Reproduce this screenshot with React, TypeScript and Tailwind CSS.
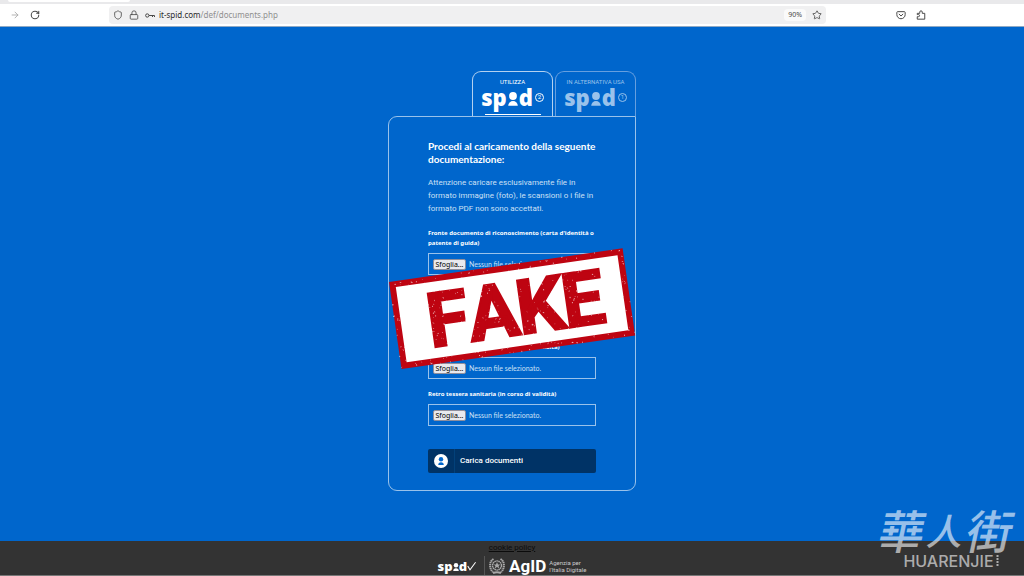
import React from 'react';
import { ArrowRight, RotateCw, Shield, Lock, Star } from 'lucide-react';
import { clsx } from 'clsx';

const FIELDS = [
  { id: 'fronte-doc', label: "Fronte documento di riconoscimento (carta d'identità o patente di guida)" },
  { id: 'retro-doc', label: "Retro documento di riconoscimento (carta d'identità o patente di guida)" },
  { id: 'fronte-tessera', label: 'Fronte tessera sanitaria (in corso di validità)' },
  { id: 'retro-tessera', label: 'Retro tessera sanitaria (in corso di validità)' },
];

// worn-ink specks of the stamp, same sequence on every render
const makeSpecks = (count: number) => {
  let seed = 41;
  const next = () => {
    seed = (seed * 16807) % 2147483647;
    return seed / 2147483647;
  };
  return Array.from({ length: count }, () => ({
    x: next() * 236,
    y: next() * 88,
    rx: 0.3 + next() * 0.7,
    ry: 0.2 + next() * 0.4,
    angle: Math.round(next() * 180),
  }));
};

const SPECKS = makeSpecks(520);

const BrowserBar = () => (
  <header className="border-b border-[#8fa9c4] bg-white font-['Noto_Sans',sans-serif]">
    <div className="h-1 bg-[#e9e9eb]">
      <div className="ml-2 h-0.5 w-[122px] rounded-b bg-white" />
    </div>
    <div className="flex h-[22px] items-center text-[#4a4a4a]">
      <div className="flex w-[109px] items-center gap-[10px] pl-[10px]">
        <button type="button" aria-label="Avanti">
          <ArrowRight className="size-[10px] text-[#a5a5a5]" />
        </button>
        <button type="button" aria-label="Ricarica">
          <RotateCw className="size-[10px]" strokeWidth={2.5} />
        </button>
      </div>
      <div className="flex h-[18px] flex-1 items-center rounded-sm bg-[#f0f0f1] px-1">
        <Shield className="size-[10px]" />
        <Lock className="ml-[6px] size-[10px]" />
        <svg viewBox="0 0 20 10" className="ml-[6px] h-[5px] w-[10px]" fill="none" stroke="currentColor" strokeWidth="2">
          <circle cx="4.5" cy="5" r="3.3" />
          <path d="M8 5h11v3M15 5v3" />
        </svg>
        <span className="ml-1 text-[8px] text-[#8f8f8f]">
          <span className="text-[#2b2b2b]">it-spid.com</span>/def/documents.php
        </span>
        <span className="ml-auto rounded-sm bg-[#fafafa] px-1 text-[7px] leading-3">90%</span>
        <button type="button" aria-label="Aggiungi ai preferiti" className="ml-[6px]">
          <Star className="size-[10px]" />
        </button>
      </div>
      <div className="flex w-[198px] items-center gap-[10px] pl-[70px]">
        <button type="button" aria-label="Pocket">
          <svg viewBox="0 0 24 24" className="size-[10px]" fill="none" stroke="currentColor" strokeWidth="2.4">
            <path d="M4 4h16a2 2 0 0 1 2 2v5a10 10 0 0 1-20 0V6a2 2 0 0 1 2-2Z" />
            <path d="m7.5 10 4.5 4.500L16.5 10" strokeLinecap="round" />
          </svg>
        </button>
        <button type="button" aria-label="Estensioni">
          <svg viewBox="0 0 24 24" className="size-[10px]" fill="none" stroke="currentColor" strokeWidth="2.4" strokeLinejoin="round">
            <path d="M3 22v-6h3a2.500 2.500 0 0 0 0-5H3V8h6V5a3 3 0 0 1 6 0v3h6v14Z" />
          </svg>
        </button>
      </div>
    </div>
  </header>
);

const SpidDot = ({ className }: { className: string }) => (
  <svg viewBox="0 0 10 14" className={className} fill="currentColor">
    <circle cx="5" cy="4" r="3.9" />
    <path d="M.2 13.800a4.800 4.800 0 0 1 9.600 0Z" />
  </svg>
);

const SpidTab = ({ title, level, active }: { title: string; level: number; active?: boolean }) => (
  <button
    type="button"
    className={clsx(
      'flex h-[45px] w-[81px] flex-col items-center rounded-t-[9px] border border-b-0 pt-[6px]',
      active ? 'border-[#b3d1f0] text-white' : 'border-[#669fdf] text-[#99c2eb]',
    )}
  >
    <span className="text-[6px] leading-2">{title}</span>
    <span className="flex items-center">
      <span className="font-['Open_Sans',sans-serif] text-[22px] leading-[22px] font-extrabold">sp</span>
      <SpidDot className="mx-px mt-1 h-[14px] w-[10px]" />
      <span className="font-['Open_Sans',sans-serif] text-[22px] leading-[22px] font-extrabold">d</span>
      <span className="ml-[2px] flex size-[9px] items-center justify-center rounded-full border border-current text-[6px] leading-none">
        {level}
      </span>
    </span>
    {active && <span className="mt-[6px] h-px w-[56px] bg-white" />}
  </button>
);

const FileField = ({ id, label }: { id: string; label: string }) => (
  <div className="mb-[10px]">
    <label htmlFor={id} className="block font-['Noto_Sans',sans-serif] text-[6px] leading-[10px] font-bold">
      {label}
    </label>
    <div className="relative mt-[5px] flex h-[22px] items-center border border-[#99c2eb] px-1">
      <input id={id} type="file" accept="image/*" className="absolute inset-0 opacity-0" />
      <span className="w-[33px] rounded-[2px] border border-[#8f8f9d] bg-[#e9e9ed] text-center font-['Noto_Sans',sans-serif] text-[7px] leading-[9px] text-black">
        Sfoglia...
      </span>
      <span className="ml-[3px] font-['Lato',sans-serif] text-[7px] leading-3 text-[#cce0f5]">
        Nessun file selezionato.
      </span>
    </div>
  </div>
);

const FakeStamp = () => (
  <svg
    viewBox="0 0 248 122"
    className="pointer-events-none absolute top-[131px] -left-px w-[248px] overflow-visible"
  >
    <g transform="translate(1 34) rotate(-8.2)">
      <rect x="3" y="3" width="230" height="82" fill="#fff" stroke="#be0411" strokeWidth="6" />
      <text
        x="32 73 122 168"
        y="71"
        fill="#be0411"
        stroke="#be0411"
        strokeWidth="2"
        className="font-['Roboto',sans-serif] text-[76px] font-bold"
      >
        FAKE
      </text>
      {SPECKS.map((s, i) => (
        <ellipse
          key={i}
          cx={s.x}
          cy={s.y}
          rx={s.rx}
          ry={s.ry}
          fill="#fff"
          fillOpacity="0.7"
          transform={`rotate(${s.angle} ${s.x} ${s.y})`}
        />
      ))}
    </g>
  </svg>
);

const UploadCard = () => (
  <div className="w-[248px]">
    <div className="flex justify-end gap-[2px]">
      <SpidTab title="UTILIZZA" level={2} active />
      <SpidTab title="IN ALTERNATIVA USA" level={1} />
    </div>
    <section className="relative rounded-[9px] rounded-tr-none border border-[#99c2eb] px-[39px] pt-[23px] pb-[17px]">
      <h1 className="font-['Lato',sans-serif] text-[10px] leading-[13px] font-bold">
        Procedi al caricamento della seguente documentazione:
      </h1>
      <p className="mt-[10px] mb-[13px] text-[8px] leading-[13px] text-[#cce0f5]">
        Attenzione caricare esclusivamente file in
        <br />
        formato immagine (foto), le scansioni o i file in
        <br />
        formato PDF non sono accettati.
      </p>
      <form>
        {FIELDS.map((f) => (
          <FileField key={f.id} {...f} />
        ))}
        <button
          type="button"
          className="mt-[23px] flex h-6 w-full items-center rounded-[2px] bg-[#036] text-left text-[8px] font-medium"
        >
          <span className="flex h-full w-[27px] items-center justify-center border-r border-[#02417a]">
            <span className="flex size-[14px] items-center justify-center rounded-full bg-white">
              <SpidDot className="h-2 w-[6px] text-[#06c]" />
            </span>
          </span>
          <span className="ml-[5px]">Carica documenti</span>
        </button>
      </form>
      <FakeStamp />
    </section>
  </div>
);

const Emblem = () => (
  <svg viewBox="0 0 32 36" className="h-[18px] w-4" fill="none" stroke="#a8a8a8" strokeWidth="2">
    <circle cx="16" cy="17" r="9" strokeWidth="3" strokeDasharray="3 1" />
    <path d="m16 10 2 5h5l-4 3 2 5-5-3-5 3 2-5-4-3h5Z" fill="#a8a8a8" stroke="none" />
    <path d="M9 4C0 9 0 23 8 30M23 4c9 5 9 19 1 26" strokeWidth="4" strokeDasharray="3 1" />
    <path d="M8 32c5-2 11-2 16 0" strokeWidth="4" />
  </svg>
);

const Footer = () => (
  <footer className="flex flex-col items-center border-b border-[#777] bg-[#333] pt-px text-white">
    <a href="#cookie" className="text-[8px] leading-3 text-[#0b0b0b] underline">
      cookie policy
    </a>
    <div className="flex h-[21px] items-center pt-[2px]">
      <span className="flex items-center font-['Open_Sans',sans-serif] text-[13px] leading-4 font-extrabold">
        sp
        <SpidDot className="mt-[2px] h-2 w-[6px]" />
        d
        <svg viewBox="0 0 12 12" className="h-[10px] w-[9px]" fill="none" stroke="currentColor" strokeWidth="1.4">
          <path d="M1 6l3 5L11.500 1" />
        </svg>
      </span>
      <span className="mr-1 ml-2 h-[19px] w-px bg-[#555]" />
      <Emblem />
      <span className="ml-1 text-[17px] leading-5 font-bold">AgID</span>
      <span className="ml-[3px] text-[6px] leading-[7px] text-[#ccc]">
        Agenzia per
        <br />
        l'Italia Digitale
      </span>
    </div>
  </footer>
);

const Watermark = () => (
  <div className="pointer-events-none absolute right-[10px] bottom-[7px] flex flex-col items-center text-white/60">
    <span className="flex items-end gap-[3px] font-['Noto_Sans_CJK_TC',sans-serif] leading-[48px] font-medium">
      <span className="-skew-x-12 text-[46px]">華</span>
      <span className="-skew-x-12 text-[36px]">人</span>
      <span className="-skew-x-12 text-[46px]">街</span>
    </span>
    <span className="flex items-center gap-[2px] pl-2 font-['Inter',sans-serif] text-[16px] leading-4 font-medium">
      HUARENJIE
      <svg viewBox="0 0 3 12" className="h-3 w-[3px]" fill="none" stroke="currentColor" strokeWidth="2">
        <path d="M1.500 0v12" strokeDasharray="2 1" />
      </svg>
    </span>
  </div>
);

const App = () => {
  return (
    <div className="relative flex min-h-screen flex-col bg-[#06c] font-['Roboto',sans-serif] text-white">
      <BrowserBar />
      <main className="flex flex-1 justify-center pt-[44px] pb-[50px]">
        <UploadCard />
      </main>
      <Footer />
      <Watermark />
    </div>
  );
};

export default App;
